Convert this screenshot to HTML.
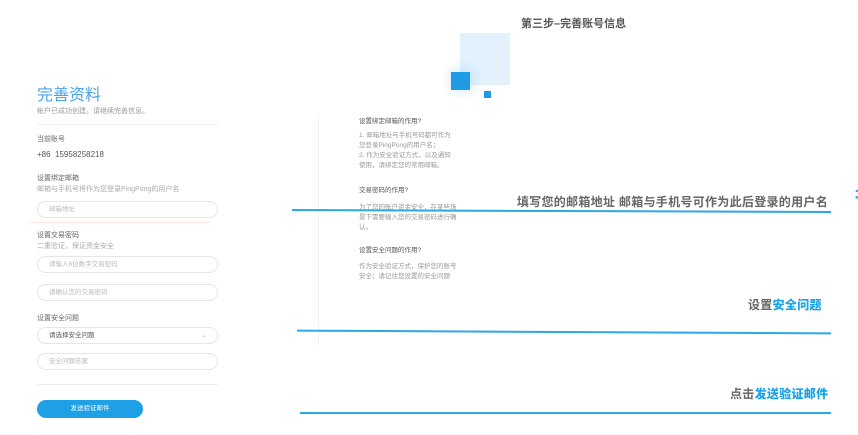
<!DOCTYPE html>
<html><head><meta charset="utf-8"><style>
*{margin:0;padding:0;box-sizing:border-box}
body{width:858px;height:435px;background:#fff;position:relative;overflow:hidden;font-family:"Liberation Sans","Noto Sans CJK SC",sans-serif}
.a{position:absolute;white-space:nowrap}
.s{font-size:7px;color:#999}
.d{font-size:7px;color:#666}
.in{position:absolute;left:37px;width:181px;height:17px;border:1px solid #e6e6e6;border-radius:9px;font-size:6.5px;color:#bbb;padding-left:11px;line-height:15px}
.r{position:absolute;left:359px;font-size:6.5px;color:#999;line-height:10px;white-space:nowrap}
.h{color:#555}
.ln{position:absolute;height:1.5px;background:#2aa8e8}
.an{position:absolute;font-size:12px;font-weight:bold;color:#666;white-space:nowrap;letter-spacing:0.3px}
.an b{color:#1aa3e8}
</style></head><body>
<div class="a" style="left:521px;top:15px;font-size:11px;font-weight:bold;color:#555">第三步–完善账号信息</div>
<div class="a" style="left:460px;top:33px;width:50px;height:52px;background:#e3f1fc"></div>
<div class="a" style="left:440px;top:60px;width:45px;height:40px;background:radial-gradient(circle,rgba(170,210,245,.5),rgba(255,255,255,0) 70%)"></div>
<div class="a" style="left:451px;top:72px;width:19px;height:18px;background:#1f9be6"></div>
<div class="a" style="left:484px;top:91px;width:7px;height:7px;background:#1f9be6"></div>

<div class="a" style="left:37px;top:87px;font-size:16px;line-height:17px;color:#4aa3e8">完善资料</div>
<div class="a s" style="left:37px;top:107px;line-height:9px">帐户已成功创建。请继续完善信息。</div>
<div class="a" style="left:37px;top:124px;width:181px;height:1px;background:#f0f0f0"></div>
<div class="a d" style="left:37px;top:134px">当前账号</div>
<div class="a" style="left:37px;top:150px;font-size:8px;color:#555">+86&nbsp; 15958258218</div>
<div class="a d" style="left:37px;top:173px">设置绑定邮箱</div>
<div class="a s" style="left:37px;top:184px;color:#aaa">邮箱与手机号将作为您登录PingPong的用户名</div>
<div class="in" style="top:201px">邮箱地址</div>
<div class="a" style="left:30px;top:222px;width:180px;height:1px;background:#fbe9ea"></div>
<div class="a d" style="left:37px;top:230px">设置交易密码</div>
<div class="a s" style="left:37px;top:241px;color:#aaa">二重验证，保证资金安全</div>
<div class="in" style="top:256px">请输入6位数字交易密码</div>
<div class="in" style="top:284px">请确认您的交易密码</div>
<div class="a d" style="left:37px;top:313px">设置安全问题</div>
<div class="in" style="top:327px;color:#555">请选择安全问题<span style="position:absolute;right:10px;top:0;color:#aaa">⌄</span></div>
<div class="in" style="top:353px">安全问题答案</div>
<div class="a" style="left:37px;top:384px;width:181px;height:1px;background:#eee"></div>
<div class="a" style="left:37px;top:400px;width:106px;height:18px;border-radius:9px;background:#1ea0e6;color:#fff;font-size:6.5px;text-align:center;line-height:18px">发送验证邮件</div>

<div class="a" style="left:318px;top:115px;width:1px;height:230px;background:#f2f2f2"></div>
<div class="r h" style="top:117px">设置绑定邮箱的作用?</div>
<div class="r" style="top:131px">1. 邮箱地址与手机号码都可作为<br>您登录PingPong的用户名；<br>2. 作为安全验证方式，以及通知<br>使用，请绑定您的常用邮箱。</div>
<div class="r h" style="top:186px">交易密码的作用?</div>
<div class="r" style="top:203px">为了您的账户资金安全，在某些场<br>景下需要输入您的交易密码进行确<br>认。</div>
<div class="r h" style="top:246px">设置安全问题的作用?</div>
<div class="r" style="top:262px">作为安全验证方式，保护您的账号<br>安全；请记住您设置的安全问题</div>

<div class="an" style="right:30px;top:193px">填写您的邮箱地址 邮箱与手机号可作为此后登录的用户名</div>
<div class="a" style="left:855px;top:186px;font-size:14px;color:#1aa3e8;font-weight:bold">3</div>
<div class="ln" style="left:292px;top:210px;width:539px;transform:rotate(0.2deg)"></div>
<div class="an" style="left:748px;top:296px">设置<b>安全问题</b></div>
<div class="ln" style="left:297px;top:331px;width:534px;transform:rotate(0.3deg)"></div>
<div class="an" style="left:730px;top:385px">点击<b>发送验证邮件</b></div>
<div class="ln" style="left:300px;top:412px;width:531px"></div>
</body></html>
